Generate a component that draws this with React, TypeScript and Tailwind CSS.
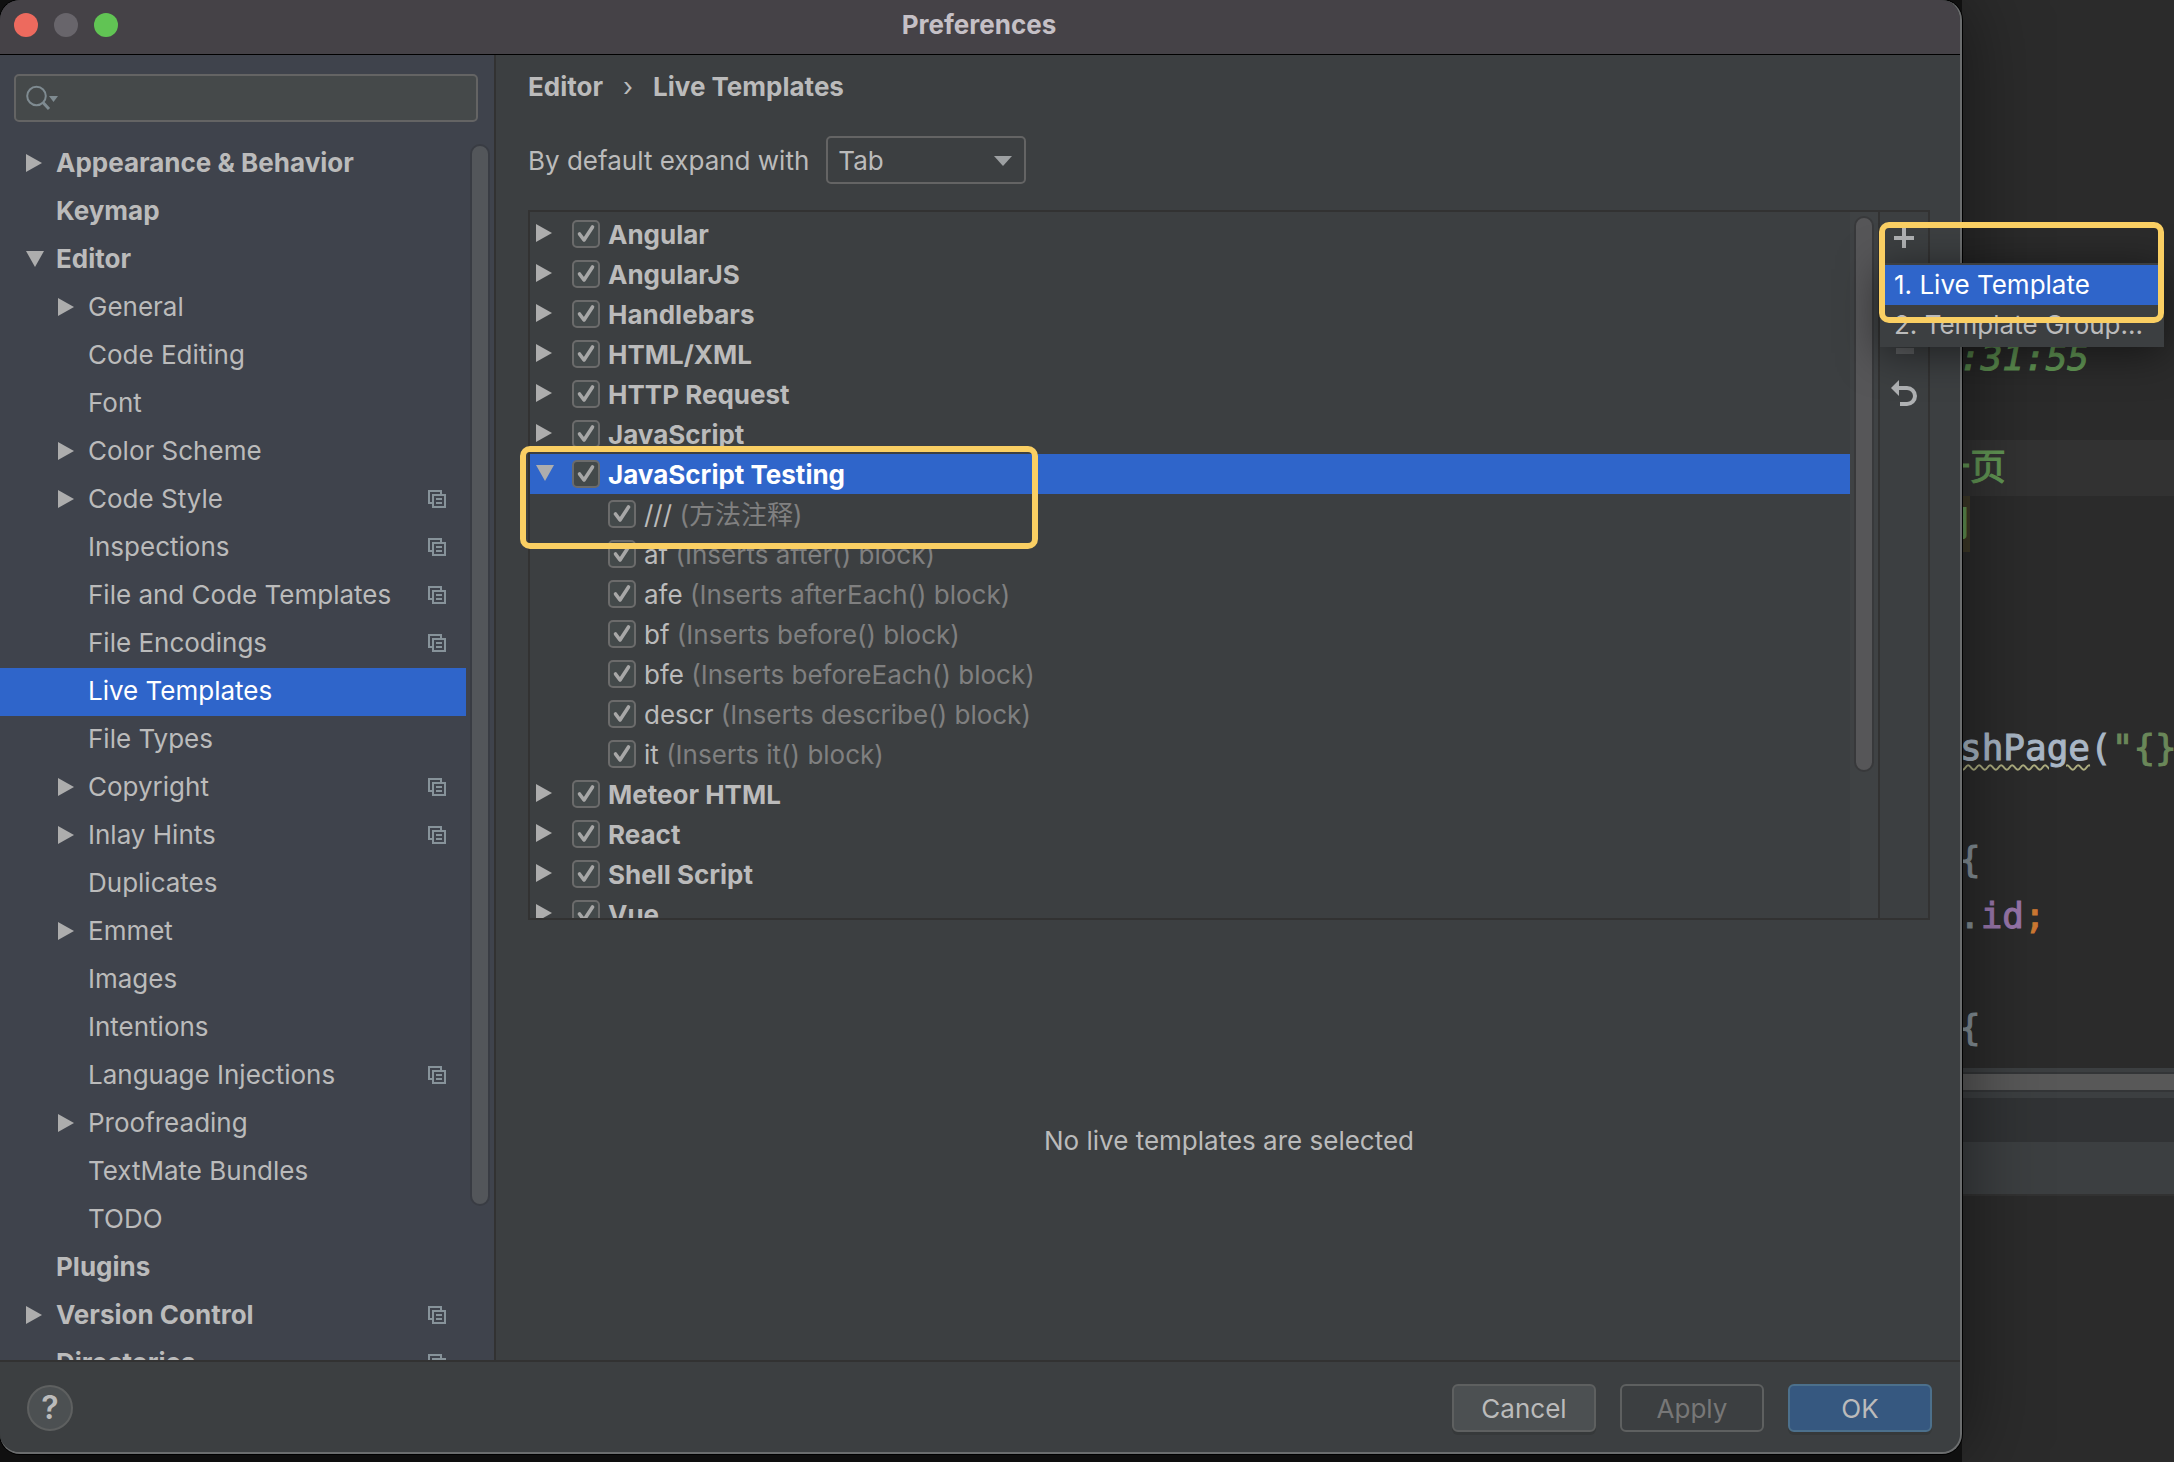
import { useState } from "react";

interface SettingItem {
  label: string;
  level?: number;
  arrow?: "right" | "down";
  project?: boolean;
}

interface TemplateRow {
  name: string;
  hint?: string;
  arrow?: "right" | "down";
}

const settings: SettingItem[] = [
  { label: "Appearance & Behavior", arrow: "right" },
  { label: "Keymap" },
  { label: "Editor", arrow: "down" },
  { label: "General", level: 1, arrow: "right" },
  { label: "Code Editing", level: 1 },
  { label: "Font", level: 1 },
  { label: "Color Scheme", level: 1, arrow: "right" },
  { label: "Code Style", level: 1, arrow: "right", project: true },
  { label: "Inspections", level: 1, project: true },
  { label: "File and Code Templates", level: 1, project: true },
  { label: "File Encodings", level: 1, project: true },
  { label: "Live Templates", level: 1 },
  { label: "File Types", level: 1 },
  { label: "Copyright", level: 1, arrow: "right", project: true },
  { label: "Inlay Hints", level: 1, arrow: "right", project: true },
  { label: "Duplicates", level: 1 },
  { label: "Emmet", level: 1, arrow: "right" },
  { label: "Images", level: 1 },
  { label: "Intentions", level: 1 },
  { label: "Language Injections", level: 1, project: true },
  { label: "Proofreading", level: 1, arrow: "right" },
  { label: "TextMate Bundles", level: 1 },
  { label: "TODO", level: 1 },
  { label: "Plugins" },
  { label: "Version Control", arrow: "right", project: true },
  { label: "Directories", project: true },
];

const templates: TemplateRow[] = [
  { name: "Angular", arrow: "right" },
  { name: "AngularJS", arrow: "right" },
  { name: "Handlebars", arrow: "right" },
  { name: "HTML/XML", arrow: "right" },
  { name: "HTTP Request", arrow: "right" },
  { name: "JavaScript", arrow: "right" },
  { name: "JavaScript Testing", arrow: "down" },
  { name: "///", hint: "(方法注释)" },
  { name: "af", hint: "(Inserts after() block)" },
  { name: "afe", hint: "(Inserts afterEach() block)" },
  { name: "bf", hint: "(Inserts before() block)" },
  { name: "bfe", hint: "(Inserts beforeEach() block)" },
  { name: "descr", hint: "(Inserts describe() block)" },
  { name: "it", hint: "(Inserts it() block)" },
  { name: "Meteor HTML", arrow: "right" },
  { name: "React", arrow: "right" },
  { name: "Shell Script", arrow: "right" },
  { name: "Vue", arrow: "right" },
];

function Arrow({ dir }: { dir?: "right" | "down" }) {
  return (
    <svg width="18" height="18" viewBox="0 0 18 18" className="shrink-0 fill-[#adadad]" aria-hidden="true">
      {dir === "right" && <path d="M0 0L16 9L0 18Z" />}
      {dir === "down" && <path d="M0 1H18L9 17Z" />}
    </svg>
  );
}

function ProjectIcon() {
  return (
    <svg width="18" height="18" viewBox="0 0 18 18" fill="none" stroke="#87939a" strokeWidth="2" aria-hidden="true">
      <path d="M4 13H1V1H13V4" />
      <path d="M5 5H17V17H5Z" />
      <path d="M8 9H14M8 13H14" />
    </svg>
  );
}

function Checkbox({ id }: { id: string }) {
  return (
    <span className="relative flex size-7 shrink-0">
      <input
        id={id}
        type="checkbox"
        defaultChecked
        className="peer size-7 appearance-none rounded-[5px] border-2 border-[#6b6b6b] bg-[#43494a]"
      />
      <svg viewBox="0 0 28 28" className="pointer-events-none absolute inset-0 hidden peer-checked:block" fill="none" stroke="#a7a7a7" strokeWidth="3.6" aria-hidden="true">
        <path d="M7.5 14L12 20L20.5 7" strokeLinecap="round" strokeLinejoin="round" />
      </svg>
    </span>
  );
}

function TitleBar() {
  return (
    <header className="relative flex h-[55px] shrink-0 items-center rounded-t-[20px] border-b border-black bg-[#454247] pb-1 pl-[14px]">
      <div className="flex gap-4">
        <button aria-label="Close" className="size-6 rounded-full bg-[#ed6a5e]" />
        <button aria-label="Minimize" className="size-6 rounded-full bg-[#68656b]" />
        <button aria-label="Zoom" className="size-6 rounded-full bg-[#61c454]" />
      </div>
      <h1 className="flex-1 pr-[120px] text-center font-bold text-[#c5c0c6]">Preferences</h1>
    </header>
  );
}

function Sidebar({ selected, onSelect }: { selected: string; onSelect: (v: string) => void }) {
  return (
    <nav className="flex w-[496px] shrink-0 flex-col border-r-2 border-[#323232] bg-[#3f434c] pt-[19px]">
      <label className="ml-[14px] mr-4 flex h-12 shrink-0 items-center rounded-[5px] border-2 border-[#646464] bg-[#45494a] pl-[10px]">
        <svg width="34" height="26" viewBox="0 0 34 26" fill="none" stroke="#7f8b91" strokeWidth="2" aria-hidden="true">
          <circle cx="10.5" cy="11" r="9.3" />
          <path d="M17 17.5L23 24" strokeWidth="3" />
          <path d="M23 11H32L27.5 17Z" fill="#7f8b91" stroke="none" />
        </svg>
        <input aria-label="Search settings" className="min-w-0 flex-1 bg-transparent outline-none" />
      </label>
      <div className="mt-[18px] flex min-h-0 flex-1 overflow-hidden">
        <ul className="flex-1">
          {settings.map((item) => (
            <li key={item.label}>
              <button
                onClick={() => onSelect(item.label)}
                className={`flex h-12 w-full items-center gap-3 pr-5 pb-[2px] text-left ${item.level ? "pl-[58px]" : "pl-[26px] font-bold"} ${
                  item.label === selected ? "bg-[#2f65ca] text-white" : ""
                }`}
              >
                <Arrow dir={item.arrow} />
                <span className="flex-1">{item.label}</span>
                {item.project && <ProjectIcon />}
              </button>
            </li>
          ))}
        </ul>
        <div className="mx-1 mb-[154px] mt-1 w-5 rounded-full border-2 border-[#393c43] bg-[#53565a]" />
      </div>
    </nav>
  );
}

function TemplateList() {
  return (
    <ul className="min-w-0 flex-1 pt-[2px]">
      {templates.map((row, i) => (
        <li
          key={row.name}
          className={`flex h-10 items-center ${row.hint ? "pl-[78px]" : "pl-[6px] font-bold"} ${row.arrow === "down" ? "bg-[#2f65ca] text-white" : ""}`}
        >
          {row.arrow && (
            <button aria-label={`Toggle ${row.name}`} className="mr-[18px] pb-[2px]">
              <Arrow dir={row.arrow} />
            </button>
          )}
          <Checkbox id={`template-${i}`} />
          <label htmlFor={`template-${i}`} className="pl-2 pt-[2px] whitespace-pre">
            {row.name}
            {row.hint && <span className="text-[#808080]"> {row.hint}</span>}
          </label>
        </li>
      ))}
    </ul>
  );
}

function Toolbar() {
  return (
    <div className="relative flex w-12 shrink-0 flex-col items-center pt-4">
      <button aria-label="Add">
        <svg width="24" height="20" viewBox="0 0 24 20" stroke="#afb1b3" strokeWidth="4" aria-hidden="true">
          <path d="M2 10H22M12 0V20" />
        </svg>
      </button>
      <button aria-label="Remove" className="mt-[86px]">
        <svg width="24" height="20" viewBox="0 0 24 20" stroke="#5c5e60" strokeWidth="6" aria-hidden="true">
          <path d="M4 17H22" />
        </svg>
      </button>
      <button aria-label="Restore defaults" className="mt-[26px]">
        <svg width="26" height="26" viewBox="0 0 26 26" fill="none" stroke="#afb1b3" strokeWidth="4" aria-hidden="true">
          <path d="M7 8H16A8 8 0 0 1 16 24H9" />
          <path d="M8 0V16L0 8Z" fill="#afb1b3" stroke="none" />
        </svg>
      </button>
      <div role="menu" className="absolute left-0 top-[51px] z-10 flex w-[284px] flex-col border-y-2 border-[#3c3f41] bg-[#3c3f41] shadow-[0_6px_40px_rgba(0,0,0,0.5)]">
        <button role="menuitem" className="h-10 bg-[#2f65ca] pl-[14px] text-left text-white">1. Live Template</button>
        <button role="menuitem" className="h-10 pl-[14px] text-left">2. Template Group...</button>
      </div>
      <div className="pointer-events-none absolute -left-px top-[10px] z-20 h-[101px] w-[285px] rounded-[10px] border-6 border-[#facf63]" />
    </div>
  );
}

function CodeBackdrop() {
  return (
    <aside className="w-[212px] shrink-0 overflow-hidden bg-[#2b2b2b] pt-[328px] font-['DejaVu_Sans_Mono','Noto_Sans_CJK_SC',monospace] text-[36px] leading-[56px] whitespace-pre text-[#a9b7c6] [-webkit-text-stroke:1px]">
      <div className="-indent-[3px] pt-[2px] italic text-[#629755]">:31:55</div>
      <div className="h-[54px]" />
      <div className="bg-[#323232] -indent-[28px] text-[#629755]">一页</div>
      <div className="flex">
        <span className="-indent-[28px] w-2 bg-[#3f3a28] text-[#629755]">用</span>
      </div>
      <div className="mt-[168px] -indent-[2px]">
        <span className="underline decoration-[#aeae80] decoration-wavy decoration-2 underline-offset-4">shPage</span>(<span className="text-[#6a8759]">"{"{}"}</span>
      </div>
      <div className="mt-14 -indent-[3px] text-[#87939a]">{"{"}</div>
      <div className="-indent-[3px] text-[#87939a]">
        .<span className="text-[#9876aa]">id</span><span className="text-[#cc7832]">;</span>
      </div>
      <div className="mt-14 -indent-[3px] text-[#87939a]">{"{"}</div>
      <div className="mt-3 border-t-4 border-b-6 border-[#3c3f41]">
        <div className="h-5 border-y-2 border-[#333537] bg-[#585858]" />
      </div>
      <div className="h-11 bg-[#313335]" />
      <div className="h-[54px] border-b-2 border-[#323232] bg-[#3c3f41]" />
    </aside>
  );
}

export default function App() {
  const [selected, setSelected] = useState("Live Templates");

  return (
    <div className="flex h-screen overflow-hidden bg-[#131313] font-[Inter,'Noto_Sans_CJK_SC',sans-serif] text-[26px] leading-8 text-[#bbbbbb]">
      <div className="z-10 flex min-w-0 flex-1 pb-2">
        <div className="flex min-w-0 flex-1 flex-col rounded-[20px] border-r-2 border-b-2 border-[#6b6d6e] bg-[#3c3f41] shadow-[0_0_0_1px_#000,0_0_80px_rgba(0,0,0,0.5)]">
          <TitleBar />
          <div className="flex min-h-0 flex-1">
            <Sidebar selected={selected} onSelect={setSelected} />
            <main className="flex min-w-0 flex-1 flex-col pl-8 pr-[30px] pt-4">
              <div className="flex font-bold">
                <span>Editor</span>
                <span className="w-[50px] text-center font-normal">›</span>
                <span>Live Templates</span>
              </div>
              <div className="mt-[33px] flex items-center gap-[17px]">
                <label htmlFor="expand-with" className="pt-[2px]">By default expand with</label>
                <div className="relative flex">
                  <select id="expand-with" defaultValue="Tab" className="h-12 w-[200px] appearance-none rounded-[5px] border-2 border-[#646464] bg-[#3c3f41] pt-[2px] pl-[10px]">
                    <option>Tab</option>
                    <option>Enter</option>
                    <option>Space</option>
                  </select>
                  <svg width="18" height="10" viewBox="0 0 18 10" className="pointer-events-none absolute right-[14px] top-5 fill-[#9da0a2]" aria-hidden="true">
                    <path d="M0 0H18L9 10Z" />
                  </svg>
                </div>
              </div>
              <div className="relative mt-[26px]">
                <div className="flex h-[710px] border-2 border-[#323232]">
                  <div className="flex min-w-0 flex-1 overflow-hidden">
                    <TemplateList />
                    <div className="w-7 shrink-0 bg-[#3f4244] pl-1 pt-1">
                      <div className="h-[556px] w-5 rounded-full border-2 border-[#38393b] bg-[#565658]" />
                    </div>
                  </div>
                  <div className="flex border-l-2 border-[#323232]">
                    <Toolbar />
                  </div>
                </div>
                <div className="pointer-events-none absolute -left-2 top-[236px] h-[103px] w-[518px] rounded-[10px] border-6 border-[#facf63]" />
              </div>
              <p className="flex flex-1 items-center justify-center pt-[2px]">No live templates are selected</p>
            </main>
          </div>
          <footer className="flex h-[92px] shrink-0 items-center gap-6 rounded-b-[20px] border-t-2 border-[#323232] bg-[#3c3f41] pt-[2px] pl-[27px] pr-7">
            <button aria-label="Help" className="mr-auto size-[46px] rounded-full border-2 border-[#5e6060] bg-[#4c5052] text-[32px] font-semibold">
              ?
            </button>
            <button className="h-12 w-36 rounded-md border-2 border-[#5e6060] bg-[#4c5052] pt-[2px] shadow-[0_3px_0_#36393a]">Cancel</button>
            <button disabled className="h-12 w-36 rounded-md border-2 border-[#5e6060] pt-[2px] text-[#777777]">Apply</button>
            <button className="h-12 w-36 rounded-md border-2 border-[#4c708c] bg-[#365880] pt-[2px] shadow-[0_3px_0_#36393a]">OK</button>
          </footer>
        </div>
      </div>
      <CodeBackdrop />
    </div>
  );
}
